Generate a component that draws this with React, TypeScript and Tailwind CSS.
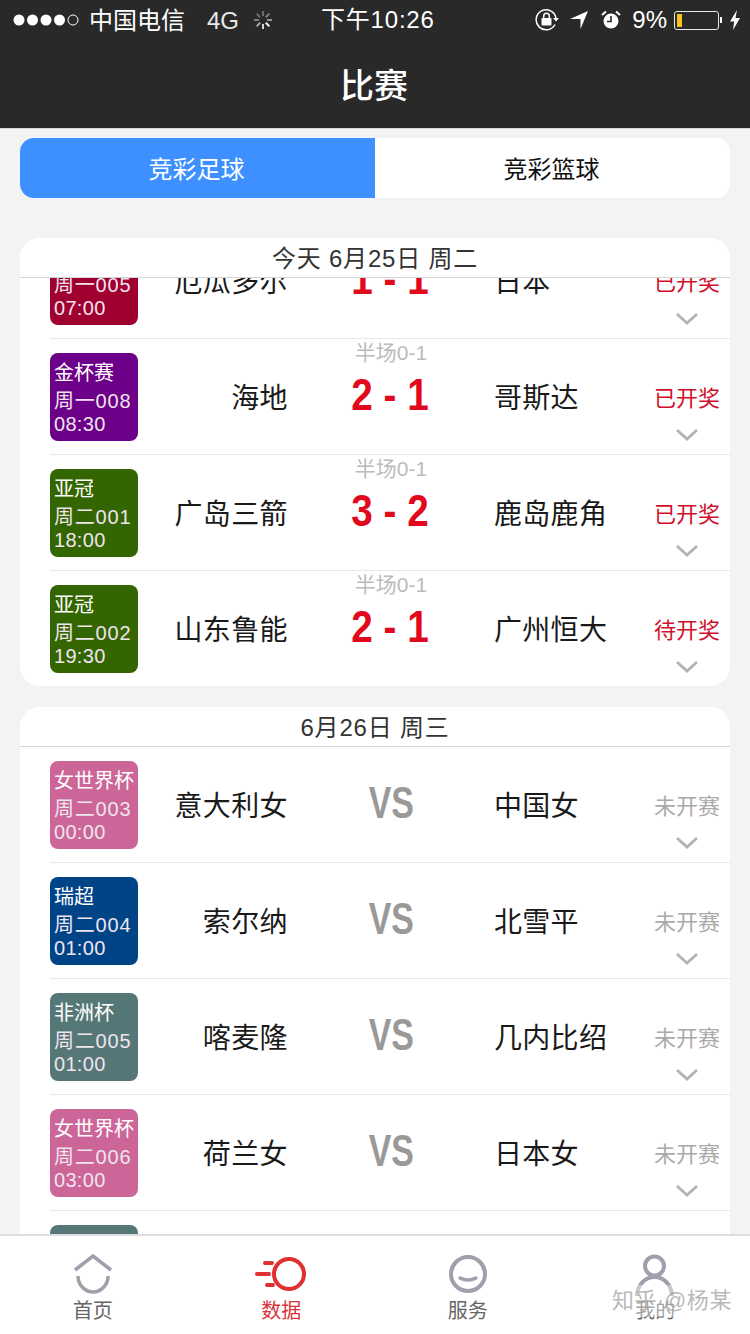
import React from "react";

type Match = {
  league: string;
  code: string;
  time: string;
  color: string;
  home: string;
  away: string;
  score?: string;
  status: string;
};

const today: Match[] = [
  { league: "美洲杯", code: "周一005", time: "07:00", color: "bg-[#a00030]", home: "厄瓜多尔", away: "日本", score: "1 - 1", status: "已开奖" },
  { league: "金杯赛", code: "周一008", time: "08:30", color: "bg-[#6c0088]", home: "海地", away: "哥斯达", score: "2 - 1", status: "已开奖" },
  { league: "亚冠", code: "周二001", time: "18:00", color: "bg-[#336600]", home: "广岛三箭", away: "鹿岛鹿角", score: "3 - 2", status: "已开奖" },
  { league: "亚冠", code: "周二002", time: "19:30", color: "bg-[#336600]", home: "山东鲁能", away: "广州恒大", score: "2 - 1", status: "待开奖" },
];

const tomorrow: Match[] = [
  { league: "女世界杯", code: "周二003", time: "00:00", color: "bg-[#cc6699]", home: "意大利女", away: "中国女", status: "未开赛" },
  { league: "瑞超", code: "周二004", time: "01:00", color: "bg-[#004488]", home: "索尔纳", away: "北雪平", status: "未开赛" },
  { league: "非洲杯", code: "周二005", time: "01:00", color: "bg-[#557777]", home: "喀麦隆", away: "几内比绍", status: "未开赛" },
  { league: "女世界杯", code: "周二006", time: "03:00", color: "bg-[#cc6699]", home: "荷兰女", away: "日本女", status: "未开赛" },
  { league: "非洲杯", code: "周二007", time: "03:30", color: "bg-[#557777]", home: "", away: "", status: "" },
];

function Row({ m, last }: { m: Match; last?: boolean }) {
  return (
    <div className={`ml-[30px] h-[116px] flex items-start shrink-0 ${last ? "" : "border-b border-[#e8e8e8]"}`}>
      <div className={`${m.color} mt-[14px] w-[88px] h-[88px] rounded-[8px] pl-[5px] pt-[7px] text-white text-[20px] shrink-0 overflow-hidden whitespace-nowrap`}>
        <div className="leading-[27px] -ml-px">{m.league}</div>
        <div className="leading-[28px] -ml-px text-[#f0e4ee] tracking-[0.8px]">{m.code}</div>
        <div className="leading-[18px] -ml-px text-[#f0e4ee] tracking-[0.3px]">{m.time}</div>
      </div>
      <div className="mt-[14px] pt-[4px] w-[150px] h-[88px] flex items-center justify-end text-[28px] tracking-[0.4px] text-[#1a1a1a] shrink-0">{m.home}</div>
      <div className="w-[206px] flex flex-col items-center shrink-0">
        {m.score ? (
          <>
            <div className="leading-[28px] text-[21px] text-[#bbbbbb]">半场0-1</div>
            <div className="-ml-[2px] leading-[56px] text-[44px] font-bold text-[#e00a1c] scale-x-[0.88] whitespace-nowrap">{m.score}</div>
          </>
        ) : (
          m.status && <div className="mt-[28px] leading-[56px] text-[44px] font-bold text-[#999999] scale-x-[0.77]">VS</div>
        )}
      </div>
      <div className="mt-[14px] pt-[4px] w-[161px] h-[88px] flex items-center text-[28px] tracking-[0.3px] text-[#1a1a1a] shrink-0">{m.away}</div>
      {m.status && (
        <div className="mt-[45px] w-[64px] flex flex-col items-center shrink-0">
          <div className={`leading-[30px] text-[22px] whitespace-nowrap ${m.score ? "text-[#d0102a]" : "text-[#aaaaaa]"}`}>{m.status}</div>
          <svg width="24" height="14" viewBox="0 0 24 14" className="mt-[14px]">
            <path d="M2 2 L12 11 L22 2" fill="none" stroke="#b4b4b4" strokeWidth="3" />
          </svg>
        </div>
      )}
    </div>
  );
}

function CardHeader({ children }: { children: React.ReactNode }) {
  return (
    <div className="relative z-10 h-[40px] pt-[2px] bg-white border-b border-[#d4d4d4] flex items-center justify-center text-[24px] tracking-[0.8px] text-[#333333] shrink-0">
      {children}
    </div>
  );
}

function StatusBar() {
  return (
    <div className="h-[40px] flex items-center text-white text-[24px] leading-none">
      <div className="w-[321px] flex items-center pl-[13px] shrink-0">
        <svg width="68" height="14" viewBox="0 0 68 14">
          <circle cx="6" cy="7" r="5.5" fill="#fff" />
          <circle cx="19.5" cy="7" r="5.5" fill="#fff" />
          <circle cx="33" cy="7" r="5.5" fill="#fff" />
          <circle cx="46.5" cy="7" r="5.5" fill="#fff" />
          <circle cx="60" cy="7" r="5" fill="none" stroke="#fff" strokeWidth="1" />
        </svg>
        <span className="ml-[8px] pt-[2px]">中国电信</span>
        <span className="ml-[22px] pt-[2px] text-[#e8e8e8]">4G</span>
        <svg width="20" height="20" viewBox="0 0 20 20" className="ml-[14px]">
          <g stroke="#fff" strokeWidth="2">
            <path d="M10 1V6" opacity="0.3" />
            <path d="M16.4 3.6L12.8 7.2" opacity="0.4" />
            <path d="M19 10H14" opacity="0.5" />
            <path d="M16.4 16.4L12.8 12.8" opacity="0.95" />
            <path d="M10 19V14" opacity="0.8" />
            <path d="M3.6 16.4L7.2 12.8" opacity="0.6" />
            <path d="M1 10H6" opacity="0.4" />
            <path d="M3.6 3.6L7.2 7.2" opacity="0.3" />
          </g>
        </svg>
      </div>
      <span className="whitespace-nowrap tracking-[0.8px]">下午10:26</span>
      <div className="ml-auto flex items-center pr-[10px]">
        <svg width="24" height="24" viewBox="0 0 24 24">
          <path d="M20 16.5A10 10 0 1 1 21 10" fill="none" stroke="#fff" strokeWidth="1.5" />
          <path d="M18 10H24L21 13.5Z" fill="#fff" />
          <rect x="6.5" y="10" width="10" height="7.5" rx="1" fill="#fff" />
          <path d="M8.7 10V8A2.8 2.8 0 0 1 14.3 8V10" fill="none" stroke="#fff" strokeWidth="1.5" />
        </svg>
        <svg width="18" height="18" viewBox="0 0 18 18" className="ml-[11px]">
          <path d="M18 0L10.5 18V8H0Z" fill="#fff" />
        </svg>
        <svg width="20" height="20" viewBox="0 0 20 20" className="ml-[13px]">
          <circle cx="10" cy="11" r="7.5" fill="#fff" />
          <path d="M10 6V11.5H6" fill="none" stroke="#292929" strokeWidth="1.6" />
          <path d="M1 5L5 1.5M19 5L15 1.5" stroke="#fff" strokeWidth="2" />
        </svg>
        <span className="ml-[11px]">9%</span>
        <div className="ml-[7px] w-[45px] h-[19px] rounded-[3px] border border-[#e8e8e8] p-[2px]">
          <div className="w-[5px] h-full bg-[#f5c518]" />
        </div>
        <div className="ml-px w-[2px] h-[6px] bg-white" />
        <svg width="10" height="20" viewBox="0 0 10 20" className="ml-[8px]">
          <path d="M7 0L0 11.5H4.2L3 20L10 8H5.5Z" fill="#fff" />
        </svg>
      </div>
    </div>
  );
}

function NavItem({ label, active, children }: { label: string; active?: boolean; children: React.ReactNode }) {
  return (
    <div className="flex flex-col items-center pt-[18px]">
      <svg width="60" height="42" viewBox="0 0 60 42">{children}</svg>
      <div className={`pt-px leading-[28px] text-[20px] ${active ? "text-[#d8343c]" : "-ml-[2px] text-[#666666]"}`}>{label}</div>
    </div>
  );
}

export default function App() {
  return (
    <div className="relative w-[750px] h-[1334px] overflow-hidden bg-[#f3f3f3] flex flex-col font-['Liberation_Sans','Noto_Sans_CJK_SC',sans-serif]">
      <header className="h-[129px] bg-[#292929] border-b border-[#d8d8d8] shrink-0">
        <StatusBar />
        <div className="pr-[2px] text-center text-white text-[34px] font-medium leading-[92px]">比赛</div>
      </header>

      <main className="flex-1 min-h-0 overflow-hidden px-[20px] pt-[9px]">
        <div className="h-[60px] rounded-[14px] overflow-hidden bg-white grid grid-cols-[355px_355px] text-[24px]">
          <div className="bg-[#3e8fff] pt-[3px] pr-[2px] text-white flex items-center justify-center">竞彩足球</div>
          <div className="text-[#111111] pt-[3px] pr-[2px] flex items-center justify-center">竞彩篮球</div>
        </div>

        <section className="mt-[40px] h-[448px] rounded-[20px] overflow-hidden bg-white flex flex-col">
          <CardHeader>今天 6月25日 周二</CardHeader>
          <div className="flex-1 min-h-0 overflow-hidden">
            <div className="-mt-[55px]">
              {today.map((m, i) => (
                <Row key={m.code} m={m} last={i === today.length - 1} />
              ))}
            </div>
          </div>
        </section>

        <section className="mt-[21px] rounded-t-[20px] overflow-hidden bg-white flex flex-col">
          <CardHeader>6月26日 周三</CardHeader>
          {tomorrow.map((m) => (
            <Row key={m.code} m={m} />
          ))}
        </section>
      </main>

      <nav className="h-[100px] shrink-0 bg-white border-t-2 border-[#dedede] grid grid-cols-4">
        <NavItem label="首页">
          <path d="M11 16L29 2L47 16" fill="none" stroke="#a0a0ac" strokeWidth="3.5" />
          <path d="M14 22A15 16 0 0 0 44 22" fill="none" stroke="#a0a0ac" strokeWidth="3.5" />
        </NavItem>
        <NavItem label="数据" active>
          <circle cx="38" cy="20" r="15" fill="none" stroke="#e03030" strokeWidth="4" />
          <path d="M14 9H21M6 20H18M16 31H22" stroke="#e03030" strokeWidth="4" strokeLinecap="round" />
        </NavItem>
        <NavItem label="服务">
          <circle cx="29" cy="20" r="17" fill="none" stroke="#a0a0ac" strokeWidth="4" />
          <path d="M21 24Q29 28 37 24" fill="none" stroke="#a0a0ac" strokeWidth="3.5" strokeLinecap="round" />
        </NavItem>
        <NavItem label="我的">
          <circle cx="28.5" cy="12" r="9.5" fill="none" stroke="#a0a0ac" strokeWidth="4" />
          <path d="M11 42A17.5 19 0 0 1 46 42" fill="none" stroke="#a0a0ac" strokeWidth="4" />
        </NavItem>
      </nav>

      <div className="absolute left-[612px] top-[1285px] text-[22px] tracking-[0.6px] leading-[32px] whitespace-nowrap text-[#9a9a9a]/70 bg-white/40">知乎 @杨某</div>
    </div>
  );
}
